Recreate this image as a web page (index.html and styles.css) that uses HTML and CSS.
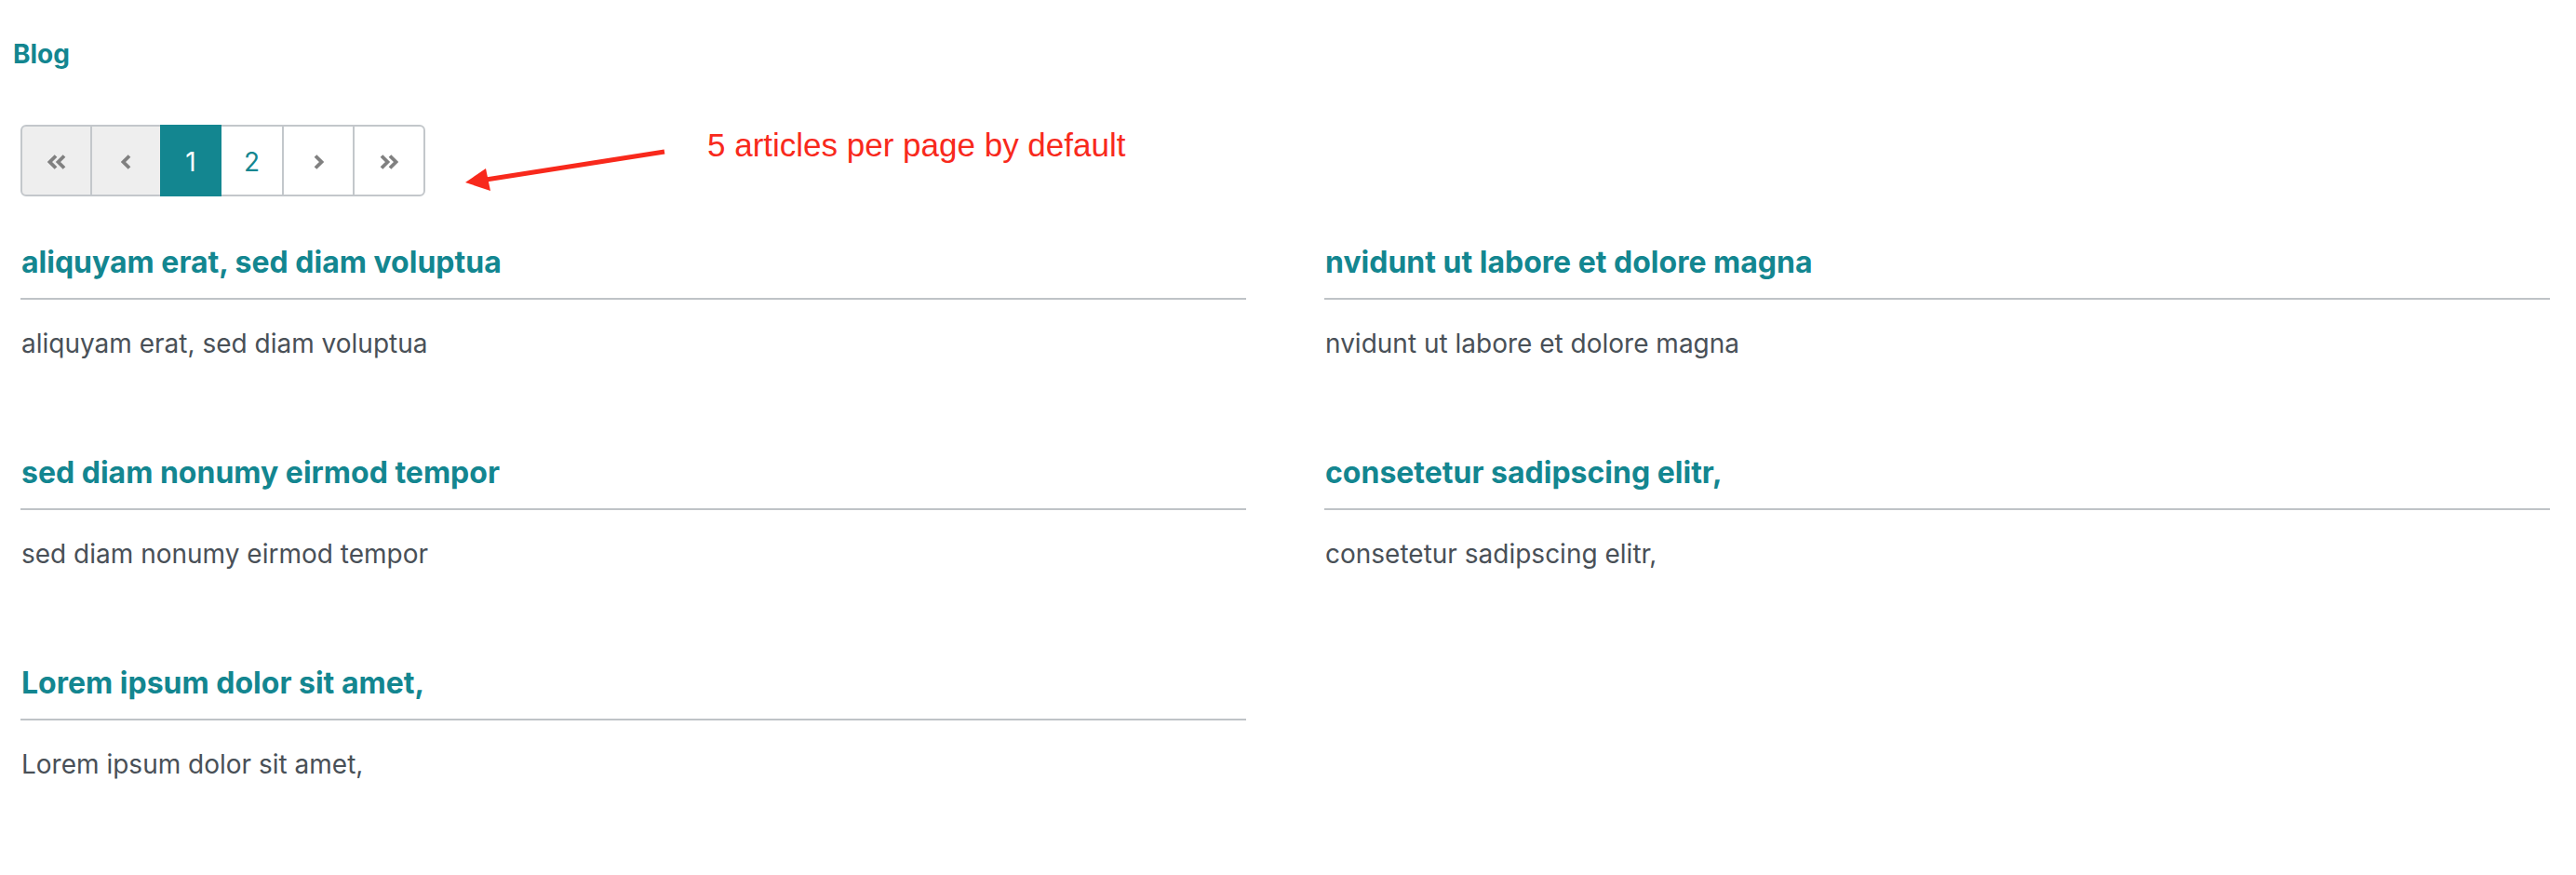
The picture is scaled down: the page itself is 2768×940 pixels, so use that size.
FILE: index.html
```html
<!DOCTYPE html>
<html lang="en">
<head>
<meta charset="utf-8">
<title>Blog</title>
<link rel="stylesheet" href="styles.css">
</head>
<body>
<header class="site-header">
  <a class="brand" href="#">Blog</a>
</header>
<main class="content">
  <div class="pager-wrap">
    <nav class="pagination" aria-label="Pages">
      <span class="page disabled" aria-label="First">
        <svg class="chev chev-double" viewBox="0 0 20 16" aria-hidden="true"><polyline points="9,1.5 2.5,8 9,14.5"/><polyline points="18,1.5 11.5,8 18,14.5"/></svg>
      </span>
      <span class="page disabled" aria-label="Previous">
        <svg class="chev chev-single" viewBox="0 0 11 16" aria-hidden="true"><polyline points="9,1.5 2.5,8 9,14.5"/></svg>
      </span>
      <span class="page active num one">1</span>
      <a class="page num" href="#">2</a>
      <a class="page wide" href="#" aria-label="Next">
        <svg class="chev chev-single" viewBox="0 0 11 16" aria-hidden="true"><polyline points="2,1.5 8.5,8 2,14.5"/></svg>
      </a>
      <a class="page wide" href="#" aria-label="Last">
        <svg class="chev chev-double" viewBox="0 0 20 16" aria-hidden="true"><polyline points="2,1.5 8.5,8 2,14.5"/><polyline points="11,1.5 17.5,8 11,14.5"/></svg>
      </a>
    </nav>
    <div class="annotation">
      <svg class="annotation-arrow" viewBox="0 0 240 60" aria-hidden="true">
        <line x1="235" y1="23" x2="40" y2="53.5" />
        <polygon points="21,56 43,41 48,65" />
      </svg>
      <span class="annotation-text">5 articles per page by default</span>
    </div>
  </div>

  <section class="articles">
    <article class="article">
      <h2 class="article-title">aliquyam erat, sed diam voluptua</h2>
      <p class="article-body">aliquyam erat, sed diam voluptua</p>
    </article>
    <article class="article">
      <h2 class="article-title">nvidunt ut labore et dolore magna</h2>
      <p class="article-body">nvidunt ut labore et dolore magna</p>
    </article>
    <article class="article">
      <h2 class="article-title">sed diam nonumy eirmod tempor</h2>
      <p class="article-body">sed diam nonumy eirmod tempor</p>
    </article>
    <article class="article">
      <h2 class="article-title">consetetur sadipscing elitr,</h2>
      <p class="article-body">consetetur sadipscing elitr,</p>
    </article>
    <article class="article">
      <h2 class="article-title">Lorem ipsum dolor sit amet,</h2>
      <p class="article-body">Lorem ipsum dolor sit amet,</p>
    </article>
  </section>
</main>
</body>
</html>
```

FILE: styles.css
```css
* { box-sizing: border-box; }

html, body {
  margin: 0;
  background: #ffffff;
}

body {
  font-family: Inter, "Noto Sans", "Liberation Sans", sans-serif;
  font-size: 28px;
  color: #495057;
}

.site-header {
  padding: 41px 14px 0 14px;
  height: 134px;
}

.brand {
  display: inline-block;
  font-weight: 700;
  font-size: 28px;
  line-height: 34px;
  color: #138690;
  text-decoration: none;
}

.content {
  padding: 0 28px 0 22px;
}

.pager-wrap {
  position: relative;
  height: 77px;
}

.pagination {
  display: inline-flex;
  height: 77px;
}

.page {
  display: flex;
  align-items: center;
  justify-content: center;
  height: 77px;
  width: 77px;
  border: 2px solid #c3c7cb;
  margin-left: -2px;
  background: #ffffff;
  color: #138690;
  text-decoration: none;
  font-size: 28px;
  line-height: 42px;
  padding-top: 2px;
}

.page:first-child {
  margin-left: 0;
  border-radius: 6px 0 0 6px;
}

.page:last-child {
  border-radius: 0 6px 6px 0;
}

.page.wide { width: 78px; }
.page.num { width: 69px; }
.page.num.one { width: 66px; }

.page.disabled {
  background: #eeeeee;
}

.page.active {
  background: #138690;
  border-color: #138690;
  color: #ffffff;
  position: relative;
  z-index: 1;
}

.chev {
  height: 16px;
  fill: none;
  stroke: #808080;
  stroke-width: 3.8;
  stroke-linecap: butt;
  stroke-linejoin: miter;
}

.chev-double { width: 20px; }
.chev-single { width: 11px; }

.annotation {
  position: absolute;
  left: 457px;
  top: -4px;
}

.annotation-arrow {
  position: absolute;
  left: 0;
  top: 0;
  width: 240px;
  height: 80px;
  overflow: visible;
}

.annotation-arrow line {
  stroke: #f8291c;
  stroke-width: 5;
}

.annotation-arrow polygon {
  fill: #f8291c;
}

.annotation-text {
  position: absolute;
  left: 281px;
  top: 6px;
  white-space: nowrap;
  font-family: "Liberation Sans", Arial, sans-serif;
  font-size: 35px;
  line-height: 39px;
  color: #f8291c;
}

.articles {
  display: grid;
  grid-template-columns: 1fr 1fr;
  column-gap: 84px;
  padding-top: 52px;
}

.article {
  height: 226px;
}

.article-title {
  margin: 0;
  padding: 0 0 19px 1px;
  font-size: 32px;
  line-height: 38px;
  font-weight: 700;
  color: #138690;
  border-bottom: 2px solid #bfc3c7;
}

.article-body {
  margin: 26px 0 0 0;
  padding-left: 1px;
  font-size: 28px;
  line-height: 42px;
  color: #495057;
}
```
